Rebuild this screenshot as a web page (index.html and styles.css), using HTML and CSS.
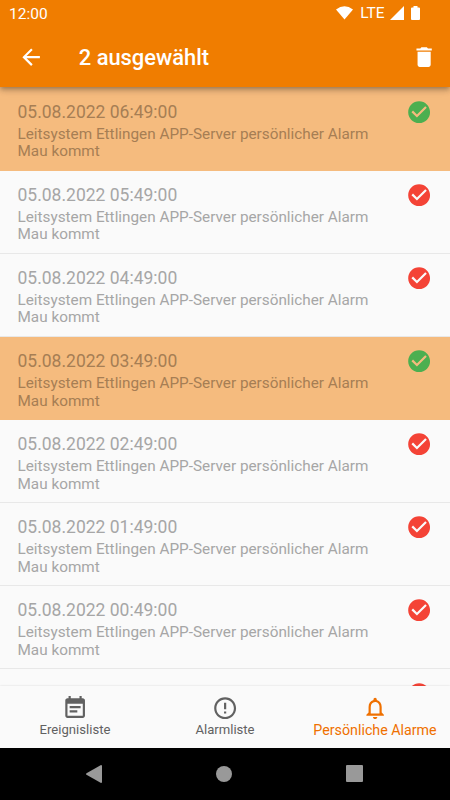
FILE: index.html
```
<!DOCTYPE html>
<html lang="de">
<head>
  <meta charset="utf-8">
  <title>Persönliche Alarme</title>
  <link rel="stylesheet" href="styles.css">
</head>
<body>
  <svg width="0" height="0" class="sprite">
    <symbol id="check" viewBox="0 0 24 24">
      <path d="M12 2C6.480 2 2 6.480 2 12s4.480 10 10 10 10-4.480 10-10S17.520 2 12 2zm-2 15l-5-5 1.410-1.410L10 14.170l7.590-7.590L19 8l-9 9z"/>
    </symbol>
  </svg>

  <header class="header">
    <div class="status-bar">
      <span class="time">12:00</span>
      <svg class="wifi" width="17" height="14" viewBox="0 0 17 14"><path d="M0 3.500Q8.500-2.800 17 3.500L8.500 13.500z"/></svg>
      <span class="network">LTE</span>
      <svg class="signal" width="14" height="14" viewBox="0 0 14 14"><path d="M14 0v14H0z"/></svg>
      <svg class="battery" width="9" height="14" viewBox="0 0 9 14"><path d="M2.500 0h4v1.500H8q1 0 1 1V13q0 1-1 1H1q-1 0-1-1V2.500q0-1 1-1h1.500z"/></svg>
    </div>
    <div class="app-bar">
      <svg class="icon" viewBox="0 0 24 24"><path d="M20 11H7.830l5.590-5.590L12 4l-8 8 8 8 1.410-1.410L7.830 13H20v-2z"/></svg>
      <h1>2 ausgewählt</h1>
      <svg class="icon" viewBox="0 0 24 24"><path d="M6 19c0 1.100.9 2 2 2h8c1.100 0 2-.9 2-2V7H6v12zM19 4h-3.500l-1-1h-5l-1 1H5v2h14V4z"/></svg>
    </div>
  </header>

  <main class="list">
    <div class="row selected">
      <div class="text">
        <div class="date">05.08.2022 06:49:00</div>
        <div class="message">Leitsystem Ettlingen APP-Server persönlicher Alarm<br>Mau kommt</div>
      </div>
      <svg class="icon"><use href="#check"/></svg>
    </div>
    <div class="row">
      <div class="text">
        <div class="date">05.08.2022 05:49:00</div>
        <div class="message">Leitsystem Ettlingen APP-Server persönlicher Alarm<br>Mau kommt</div>
      </div>
      <svg class="icon"><use href="#check"/></svg>
    </div>
    <div class="row">
      <div class="text">
        <div class="date">05.08.2022 04:49:00</div>
        <div class="message">Leitsystem Ettlingen APP-Server persönlicher Alarm<br>Mau kommt</div>
      </div>
      <svg class="icon"><use href="#check"/></svg>
    </div>
    <div class="row selected">
      <div class="text">
        <div class="date">05.08.2022 03:49:00</div>
        <div class="message">Leitsystem Ettlingen APP-Server persönlicher Alarm<br>Mau kommt</div>
      </div>
      <svg class="icon"><use href="#check"/></svg>
    </div>
    <div class="row">
      <div class="text">
        <div class="date">05.08.2022 02:49:00</div>
        <div class="message">Leitsystem Ettlingen APP-Server persönlicher Alarm<br>Mau kommt</div>
      </div>
      <svg class="icon"><use href="#check"/></svg>
    </div>
    <div class="row">
      <div class="text">
        <div class="date">05.08.2022 01:49:00</div>
        <div class="message">Leitsystem Ettlingen APP-Server persönlicher Alarm<br>Mau kommt</div>
      </div>
      <svg class="icon"><use href="#check"/></svg>
    </div>
    <div class="row">
      <div class="text">
        <div class="date">05.08.2022 00:49:00</div>
        <div class="message">Leitsystem Ettlingen APP-Server persönlicher Alarm<br>Mau kommt</div>
      </div>
      <svg class="icon"><use href="#check"/></svg>
    </div>
    <div class="row">
      <div class="text"></div>
      <svg class="icon"><use href="#check"/></svg>
    </div>
  </main>

  <nav class="tabs">
    <a class="tab">
      <svg class="icon" viewBox="0 0 24 24"><path d="M17 10H7v2h10v-2zm2-7h-1V1h-2v2H8V1H6v2H5c-1.110 0-1.990.9-1.990 2L3 19c0 1.100.890 2 2 2h14c1.100 0 2-.9 2-2V5c0-1.100-.9-2-2-2zm0 16H5V8h14v11zm-5-5H7v2h7v-2z"/></svg>
      <span>Ereignisliste</span>
    </a>
    <a class="tab">
      <svg class="icon" viewBox="0 0 24 24"><path d="M11 15h2v2h-2zm0-8h2v6h-2zm.990-5C6.470 2 2 6.480 2 12s4.470 10 9.990 10C17.520 22 22 17.520 22 12S17.520 2 11.990 2zM12 20c-4.420 0-8-3.580-8-8s3.580-8 8-8 8 3.580 8 8-3.580 8-8 8z"/></svg>
      <span>Alarmliste</span>
    </a>
    <a class="tab active">
      <svg class="icon" viewBox="0 0 24 24"><path d="M12 22c1.100 0 2-.9 2-2h-4c0 1.100.9 2 2 2zm6-6v-5c0-3.070-1.630-5.640-4.500-6.320V4c0-.830-.670-1.500-1.500-1.500s-1.500.670-1.500 1.500v.680C7.640 5.360 6 7.920 6 11v5l-2 2v1h16v-1l-2-2zm-2 1H8v-6c0-2.480 1.510-4.500 4-4.500s4 2.020 4 4.500v6z"/></svg>
      <span>Persönliche Alarme</span>
    </a>
  </nav>

  <footer class="system-bar">
    <svg width="16" height="18" viewBox="0 0 16 18"><path d="M15 0q1 0 1 1v16q0 1-1 1L.5 9.800q-1-.8 0-1.600z"/></svg>
    <svg width="16" height="16" viewBox="0 0 16 16"><circle cx="8" cy="8" r="8"/></svg>
    <svg width="17" height="17" viewBox="0 0 17 17"><rect width="17" height="17" rx="1"/></svg>
  </footer>
</body>
</html>
```
FILE: styles.css
```
* {
  box-sizing: border-box;
}

body {
  margin: 0;
  height: 800px;
  display: flex;
  flex-direction: column;
  overflow: hidden;
  background-color: #fafafa;
  font-family: Roboto, sans-serif;
}

.sprite {
  display: none;
}

.icon {
  display: block;
  width: 26.25px;
  height: 26.25px;
  flex: none;
  fill: currentColor;
}

.header {
  position: relative;
  z-index: 1;
  height: 87.4px;
  flex: none;
  background-color: #f07d00;
  color: #fff;
  box-shadow: 0 2px 4px -1px rgba(0, 0, 0, 0.2), 0 4px 5px rgba(0, 0, 0, 0.14), 0 1px 10px rgba(0, 0, 0, 0.12);
}

.status-bar {
  display: flex;
  align-items: center;
  height: 26.25px;
  padding: 0 30.5px 0 9px;
  fill: #fff;
}

.time {
  margin-right: auto;
  padding-top: 2px;
  font-size: 15.5px;
}

.network {
  margin: 0 5px 0 7px;
  font-size: 15.5px;
}

.battery {
  margin-left: 7px;
}

.app-bar {
  display: flex;
  align-items: center;
  height: 61.25px;
  padding: 0 13px 0 17.5px;
}

h1 {
  flex: 1;
  margin: 0 0 0 35px;
  padding-top: 1px;
  font-size: 21.9px;
  font-weight: 500;
}

.list {
  flex: 1;
  min-height: 0;
  overflow: hidden;
}

.row {
  display: flex;
  justify-content: space-between;
  height: 83.15px;
  padding: 11.2px 17.5px 0;
  border-bottom: 1px solid #e8e8e8;
  color: #a6a6a6;
}

.row .icon {
  color: #f44336;
}

.row.selected {
  background-color: #f5bb7e;
  border-color: #f5bb7e;
  color: #a67e54;
}

.row.selected .icon {
  color: #4caf50;
}

.date {
  padding-top: 3px;
  font-size: 17.5px;
  line-height: 21px;
}

.message {
  padding-top: 3px;
  font-size: 15.3px;
  line-height: 17.5px;
}

.tabs {
  position: relative;
  display: grid;
  grid-template-columns: repeat(3, 1fr);
  height: 61.5px;
  flex: none;
  background-color: #fafafa;
  box-shadow: 0 0 2px rgba(0, 0, 0, 0.14);
}

.tab {
  display: flex;
  flex-direction: column;
  align-items: center;
  padding-top: 9px;
  color: #616161;
  font-size: 13.1px;
  line-height: 18.5px;
  white-space: nowrap;
}

.tab.active {
  color: #ef7000;
  font-size: 14.25px;
}

.system-bar {
  position: relative;
  display: flex;
  justify-content: space-between;
  align-items: center;
  height: 52.5px;
  flex: none;
  padding: 0 87px 0 86px;
  background-color: #000;
  fill: #999;
}
```
